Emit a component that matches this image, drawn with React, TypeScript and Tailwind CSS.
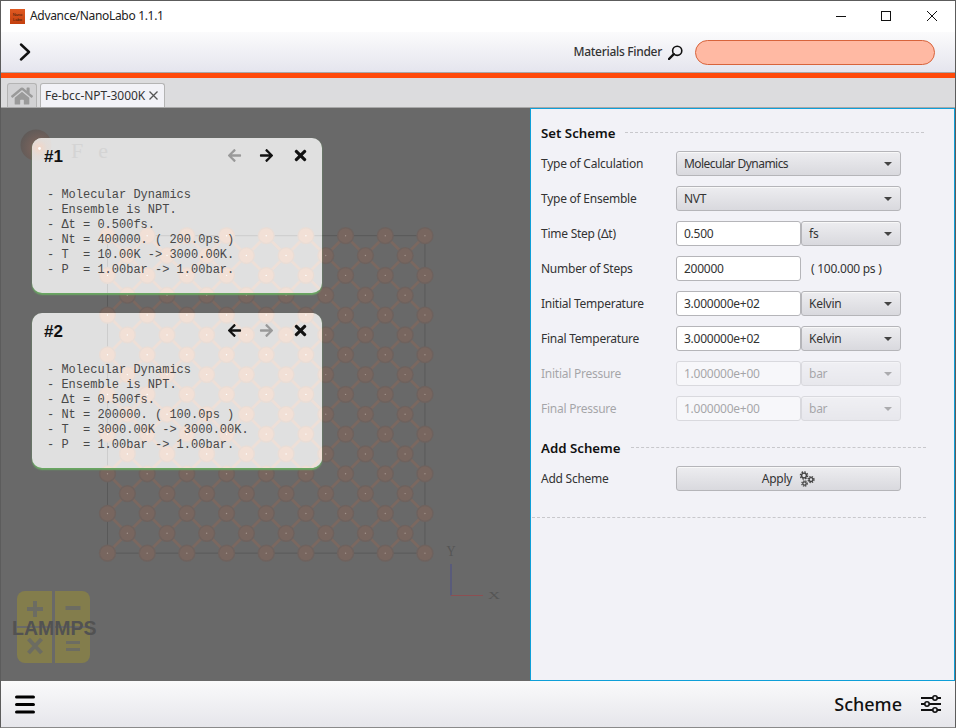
import React from "react";
import { FaArrowLeft, FaArrowRight, FaTimes, FaHome } from "react-icons/fa";

const X0 = 107.5, Y0 = 235.7, S = 39.68;

function Lattice({ pale }: { pale: boolean }) {
  const bond = pale ? "#eedfd7" : "#7b6860";
  const box = pale ? "#cdcdcd" : "#595959";
  const idx = [0, 1, 2, 3, 4, 5, 6, 7, 8];
  const corners: [number, number][] = [];
  const centers: [number, number][] = [];
  idx.forEach((i) => idx.forEach((j) => {
    corners.push([X0 + i * S, Y0 + j * S]);
    if (i < 8 && j < 8) centers.push([X0 + (i + 0.5) * S, Y0 + (j + 0.5) * S]);
  }));
  const atom = (x: number, y: number, k: string) => (
    <g key={k}>
      <circle cx={x} cy={y} r={8.6} fill={pale ? "#e9ddd6" : "#6e625e"} />
      <circle cx={x} cy={y} r={7.2} fill={pale ? "#f2e0d6" : "#78665f"} />
      <circle cx={x} cy={y} r={0.7} fill={pale ? "#ffffff" : "#a3948c"} />
    </g>
  );
  return (
    <svg width={956} height={728} className="block">
      <defs>
        <radialGradient id={pale ? "legendPale" : "legendDark"} cx="0.6" cy="0.6" r="0.65">
          {pale ? <stop offset="0%" stopColor="#f3d6c6" /> : <stop offset="0%" stopColor="#83695f" />}
          {pale ? <stop offset="40%" stopColor="#e3dcd8" /> : <stop offset="60%" stopColor="#6e5f5a" />}
          {pale ? <stop offset="100%" stopColor="#e0e0e0" /> : <stop offset="100%" stopColor="#5f5a58" />}
        </radialGradient>
      </defs>
      <rect x={X0} y={Y0} width={S * 8} height={S * 8} fill="none" stroke={box} strokeWidth={1} />
      {centers.map(([x, y], n) => (
        <g key={n} stroke={bond} strokeWidth={2.8}>
          <line x1={x - S / 2} y1={y - S / 2} x2={x + S / 2} y2={y + S / 2} />
          <line x1={x + S / 2} y1={y - S / 2} x2={x - S / 2} y2={y + S / 2} />
        </g>
      ))}
      {corners.map(([x, y], n) => atom(x, y, "c" + n))}
      {centers.map(([x, y], n) => atom(x, y, "m" + n))}
      <circle cx={36} cy={145} r={15.5} fill={pale ? "url(#legendPale)" : "url(#legendDark)"} />
      {pale && <circle cx={39.5} cy={148.5} r={1.4} fill="#ffffff" />}
      {!pale && (
        <g>
          <line x1={451} y1={564} x2={451} y2={595.5} stroke="#4a4f8c" strokeWidth={1} />
          <line x1={451} y1={595.5} x2={483} y2={595.5} stroke="#8c4f52" strokeWidth={1} />
          <text x={446} y={556} fontFamily="'Liberation Serif', serif" fontSize={14} fill="#555555" transform="translate(45 0) scale(0.9 1)">Y</text>
          <text x={0} y={0} fontFamily="'Liberation Serif', serif" fontSize={16} fill="#555555" transform="translate(488 598.5) scale(1.05 0.6)">X</text>
        </g>
      )}
    </svg>
  );
}

function Card({ n, lines, prevOff, nextOff, top }: { n: string; lines: string[]; prevOff: boolean; nextOff: boolean; top: string }) {
  return (
    <div className={`absolute left-[31px] ${top} w-[290px] h-[155px] rounded-[10px] bg-[#e0e0e0] shadow-[0_1.5px_1.5px_#6aa862]`}>
      <div className="absolute inset-0 rounded-[10px] overflow-hidden">
        <div className={`absolute left-[-32px] ${n === "#1" ? "top-[-138px]" : "top-[-313px]"}`}>
          <Lattice pale />
        </div>
      </div>
      {n === "#1" && (
        <div className="absolute left-[39px] top-[2px] flex gap-[15px] font-['Liberation_Serif'] text-[22px] leading-[22px] text-[#d4d4d4] tracking-normal">
          <span>F</span>
          <span>e</span>
        </div>
      )}
      <div className="relative flex flex-col h-full tracking-normal">
        <div className="flex items-center h-[34px] pl-[12px]">
          <span className="font-['Liberation_Sans'] font-bold text-[17px] leading-[20px] pt-[3px] text-[#111] flex-1">{n}</span>
          <div className="flex items-center text-[15px]">
            <FaArrowLeft className={prevOff ? "text-[#999] mr-[17px]" : "text-[#111] mr-[17px]"} />
            <FaArrowRight className={nextOff ? "text-[#999] mr-[18px]" : "text-[#111] mr-[18px]"} />
            <FaTimes className="text-[#111] text-[17px] mr-[13px]" />
          </div>
        </div>
        <pre className="font-['Liberation_Mono'] text-[12px] leading-[15px] text-[#484848] pl-[15px] mt-[16px]">{lines.join("\n")}</pre>
      </div>
    </div>
  );
}

const ctrl = "h-[25px] rounded-[3px] border border-[#b5b5b9] text-[12px]";
const btn = "bg-gradient-to-b from-[#ededf0] to-[#d9d9de] shadow-[inset_0_1px_0_#f8f8f8]";

function Caret() {
  return <span className="w-0 h-0 border-l-[4px] border-r-[4px] border-t-[4px] border-l-transparent border-r-transparent border-t-[#444]" />;
}

function Combo({ text, w, off, tight }: { text: string; w: string; off?: boolean; tight?: boolean }) {
  return (
    <div className={`${ctrl} ${btn} ${w} flex items-center justify-between pl-[7px] pr-[8px] ${off ? "opacity-40" : ""}`}>
      <span className={tight ? "tracking-[-0.55px]" : ""}>{text}</span>
      <Caret />
    </div>
  );
}

function Field({ text, off }: { text: string; off?: boolean }) {
  return (
    <div className={`${ctrl} w-[125px] bg-white flex items-center pl-[7px] ${off ? "opacity-40" : ""}`}>{text}</div>
  );
}

function Row({ label, off, children }: { label: string; off?: boolean; children: React.ReactNode }) {
  return (
    <div className="flex items-center h-[25px]">
      <span className={`w-[135px] text-[12px] ${off ? "opacity-40" : ""}`}>{label}</span>
      <div className="flex items-center w-[225px]">{children}</div>
    </div>
  );
}

function Section({ title, w }: { title: string; w: string }) {
  return (
    <div className={`flex items-center h-[20px] ${w} gap-[10px]`}>
      <span className="text-[13.25px] font-semibold text-[#111] whitespace-nowrap tracking-normal pt-[1px]">{title}</span>
      <span className="flex-1 border-t border-dashed border-[#c8c8cc] mb-[2px]" />
    </div>
  );
}

function Gears() {
  return (
    <svg width="16" height="16" viewBox="0 0 16 16" fill="none" stroke="#444">
      <circle cx="5" cy="4.5" r="2.4" strokeWidth="1.4" />
      <circle cx="5" cy="4.5" r="3.6" strokeWidth="1.4" strokeDasharray="1.6 1.2" />
      <circle cx="12" cy="8.5" r="1.9" strokeWidth="1.3" />
      <circle cx="12" cy="8.5" r="3" strokeWidth="1.3" strokeDasharray="1.4 1" />
      <circle cx="5.5" cy="12.5" r="1.7" strokeWidth="1.2" />
      <circle cx="5.5" cy="12.5" r="2.7" strokeWidth="1.2" strokeDasharray="1.3 0.9" />
    </svg>
  );
}

function LogoTile({ corner, children }: { corner: string; children: React.ReactNode }) {
  return (
    <div className={`bg-[#837d4c] ${corner} flex items-center justify-center`}>
      <svg width="20" height="20" viewBox="0 0 20 20" stroke="#6c6c62" strokeWidth="4" fill="none">{children}</svg>
    </div>
  );
}

export default function App() {
  return (
    <div className="w-[956px] h-[728px] flex flex-col border border-[#5c5c5c] border-b-[#8a8a8a] overflow-hidden font-['Noto_Sans',sans-serif] text-[#333] tracking-[-0.25px] bg-white">
      <div className="h-[31px] shrink-0 bg-white flex items-center pl-[9px] text-[12px] text-[#222]">
        <div className="w-[15px] h-[15px] bg-gradient-to-b from-[#e05a22] to-[#c4400e] flex flex-col items-center justify-center font-['Liberation_Sans'] text-[4px] leading-[5px] text-[#3a1a0a] tracking-normal">
          <span>Nano</span>
          <span>Labo</span>
        </div>
        <span className="ml-[5px] flex-1 tracking-[-0.32px] mb-[1px]">Advance/NanoLabo 1.1.1</span>
        <svg width="101" height="16" viewBox="0 0 101 16" className="mr-[18px] mb-[2px]" fill="none" stroke="#111" strokeWidth="1">
          <line x1="0" y1="8.5" x2="10" y2="8.5" />
          <rect x="45.5" y="3.5" width="9" height="9" />
          <path d="M91 3 L101 13 M101 3 L91 13" />
        </svg>
      </div>
      <div className="h-[41px] shrink-0 bg-gradient-to-b from-[#fbfbfc] to-[#e5e5ee] border-b border-[#a8a8a8] flex items-center pl-[18px] pr-[20px]">
        <svg width="12" height="18" viewBox="0 0 12 18" fill="none" stroke="#111" strokeWidth="2.4" strokeLinecap="round" strokeLinejoin="round">
          <path d="M2 1.5 L10 9 L2 16.5" />
        </svg>
        <span className="ml-auto text-[12px] font-medium text-[#333] tracking-[-0.3px]">Materials Finder</span>
        <svg width="15" height="15" viewBox="0 0 15 15" className="ml-[6px] mr-[12px]" fill="none" stroke="#111" strokeWidth="1.6">
          <circle cx="9.2" cy="5.8" r="4.6" />
          <path d="M5.8 9.2 L1 14" strokeWidth="2.4" strokeLinecap="round" />
        </svg>
        <div className="w-[240px] h-[25px] rounded-full bg-[#ffb9a3] border border-[#d8643c]" />
      </div>
      <div className="h-[5px] shrink-0 bg-[#ff4a0a]" />
      <div className="h-[30px] shrink-0 bg-[#dcdcde] border-b border-[#a8a8a8] flex items-end pl-[6px] gap-[3px]">
        <div className="w-[30px] h-[24px] bg-[#d2d2d4] border border-b-0 border-[#b4b4b4] rounded-t-[3px] flex items-center justify-center text-[#9a9a9a] text-[22px]">
          <FaHome />
        </div>
        <div className="w-[125px] h-[24px] bg-[#f2f2f7] border border-b-0 border-[#b4b4b4] rounded-t-[3px] flex items-center pl-[4px] text-[12px] text-[#333] whitespace-nowrap tracking-[-0.05px]">
          Fe-bcc-NPT-3000K
          <svg width="9" height="9" viewBox="0 0 9 9" className="ml-[4px]" stroke="#555" strokeWidth="1.3"><path d="M0.5 0.5 L8.5 8.5 M8.5 0.5 L0.5 8.5" /></svg>
        </div>
      </div>
      <div className="flex-1 min-h-0 flex">
        <div className="relative w-[529px] bg-[#696969] overflow-hidden">
          <div className="absolute left-[-1px] top-[-108px]"><Lattice pale={false} /></div>
          <div className="absolute left-[16px] top-[483px] w-[73px] h-[72px] grid grid-cols-2 gap-x-[3px] gap-y-[2px]">
            <LogoTile corner="rounded-tl-[8px]"><path d="M10 2 V18 M2 10 H18" /></LogoTile>
            <LogoTile corner="rounded-tr-[8px]"><path d="M2.5 9 H17.5" /></LogoTile>
            <LogoTile corner="rounded-bl-[8px]"><path d="M3.5 3 L16.5 17 M16.5 3 L3.5 17" /></LogoTile>
            <LogoTile corner="rounded-br-[8px]"><path d="M3 6.5 H17 M3 13.5 H17" strokeWidth="3" /></LogoTile>
          </div>
          <div className="absolute left-[11px] top-[509px] font-['Liberation_Sans'] font-bold text-[19.5px] leading-[22px] text-[#525252] tracking-normal">LAMMPS</div>
          <Card n="#1" top="top-[30px]" prevOff nextOff={false} lines={["- Molecular Dynamics", "- Ensemble is NPT.", "- Δt = 0.500fs.", "- Nt = 400000. ( 200.0ps )", "- T  = 10.00K -> 3000.00K.", "- P  = 1.00bar -> 1.00bar."]} />
          <Card n="#2" top="top-[205px]" prevOff={false} nextOff lines={["- Molecular Dynamics", "- Ensemble is NPT.", "- Δt = 0.500fs.", "- Nt = 200000. ( 100.0ps )", "- T  = 3000.00K -> 3000.00K.", "- P  = 1.00bar -> 1.00bar."]} />
        </div>
        <div className="flex-1 flex flex-col bg-[#f2f2f7] border-[1.5px] border-[#0f9fd8] pl-[10px] pt-[14px]">
          <Section title="Set Scheme" w="w-[383px]" />
          <div className="flex flex-col gap-[10px] mt-[8px]">
            <Row label="Type of Calculation"><Combo text="Molecular Dynamics" w="w-[225px]" tight /></Row>
            <Row label="Type of Ensemble"><Combo text="NVT" w="w-[225px]" /></Row>
            <Row label="Time Step (Δt)"><Field text="0.500" /><Combo text="fs" w="w-[100px]" /></Row>
            <Row label="Number of Steps"><Field text="200000" /><span className="ml-[10px] text-[12px]">( 100.000 ps )</span></Row>
            <Row label="Initial Temperature"><Field text="3.000000e+02" /><Combo text="Kelvin" w="w-[100px]" /></Row>
            <Row label="Final Temperature"><Field text="3.000000e+02" /><Combo text="Kelvin" w="w-[100px]" /></Row>
            <Row label="Initial Pressure" off><Field text="1.000000e+00" off /><Combo text="bar" w="w-[100px]" off /></Row>
            <Row label="Final Pressure" off><Field text="1.000000e+00" off /><Combo text="bar" w="w-[100px]" off /></Row>
          </div>
          <div className="mt-[17px]"><Section title="Add Scheme" w="w-[385px]" /></div>
          <div className="mt-[8px]">
            <Row label="Add Scheme">
              <div className={`${ctrl} ${btn} w-[225px] flex items-center justify-center gap-[7px] text-[12.5px]`}>
                Apply <Gears />
              </div>
            </Row>
          </div>
          <div className="mt-[26px] ml-[-9px] w-[394px] border-t border-dashed border-[#c8c8cc]" />
        </div>
      </div>
      <div className="h-[46px] shrink-0 bg-gradient-to-b from-[#fafafb] to-[#e6e6eb] flex items-center pl-[14px] pr-[14px]">
        <svg width="20" height="19" viewBox="0 0 20 19" stroke="#000" strokeWidth="3.2" strokeLinecap="round">
          <path d="M1.6 2 H18.4 M1.6 9.5 H18.4 M1.6 17 H18.4" />
        </svg>
        <span className="ml-auto text-[18px] font-medium text-[#111] tracking-normal">Scheme</span>
        <svg width="20" height="18" viewBox="0 0 20 18" className="ml-[19px]" fill="#e8e8ec" stroke="#111" strokeWidth="1.6">
          <path d="M0 3 H20 M0 9 H20 M0 15 H20" strokeWidth="1.8" />
          <circle cx="14" cy="3" r="2.2" />
          <circle cx="6" cy="9" r="2.2" />
          <circle cx="14" cy="15" r="2.2" />
        </svg>
      </div>
    </div>
  );
}
